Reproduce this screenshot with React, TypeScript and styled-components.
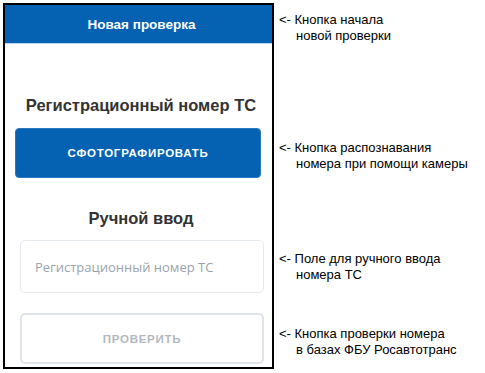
import React from "react";
import styled, { createGlobalStyle } from "styled-components";

const Global = createGlobalStyle`
  html, body { margin: 0; padding: 0; background: #ffffff; }
  body { font-family: "Liberation Sans", Arial, sans-serif; }
  * { box-sizing: border-box; }
`;

const Page = styled.div`
  display: flex;
  align-items: flex-start;
  padding: 3px 0 0 3px;
  width: 485px;
  height: 373px;
`;

const Phone = styled.div`
  width: 271px;
  height: 366px;
  border: 2px solid #000;
  display: flex;
  flex-direction: column;
  background: #fff;
`;

const Header = styled.div`
  height: 39px;
  background: #0562b2;
  border-bottom: 1px solid #b9d6ef;
  color: #fff;
  font-weight: bold;
  font-size: 13.5px;
  display: flex;
  align-items: center;
  justify-content: center;
  padding: 1px 0 0 6px;
`;

const Body = styled.div`
  display: flex;
  flex-direction: column;
`;

const SectionTitle = styled.div<{ $top: number }>`
  margin-top: ${(p) => p.$top}px;
  padding-left: 5px;
  height: 20px;
  line-height: 20px;
  text-align: center;
  font-weight: bold;
  font-size: 16.5px;
  color: #333;
`;

const PrimaryButton = styled.button`
  margin: 13px 11px 0 10px;
  height: 50px;
  border: 1px solid #2a78bd;
  border-radius: 4px;
  background: #0562b2;
  color: #fff;
  font-family: "Liberation Sans", Arial, sans-serif;
  font-weight: bold;
  font-size: 11.5px;
  letter-spacing: 0.75px;
`;

const Input = styled.input`
  margin: 12px 8px 0 15px;
  height: 53px;
  border: 1px solid #e6ebf1;
  border-radius: 5px;
  padding: 0 0 0 14px;
  font-family: "Open Sans", sans-serif;
  font-size: 13px;
  color: #333;
  outline: none;
  &::placeholder { color: #9aa3ad; }
`;

const OutlineButton = styled.button`
  margin: 20px 8px 0 15px;
  height: 51px;
  border: 2px solid #dfe4ea;
  border-radius: 5px;
  background: #fff;
  color: #b3b8be;
  font-family: "Liberation Sans", Arial, sans-serif;
  font-weight: bold;
  font-size: 11.5px;
  letter-spacing: 0.75px;
`;

const Notes = styled.div`
  display: flex;
  flex-direction: column;
  margin-left: 5px;
`;

const Note = styled.div<{ $top: number }>`
  margin-top: ${(p) => p.$top}px;
  font-size: 13px;
  line-height: 15.5px;
  color: #000;
  white-space: nowrap;
`;

const Cont = styled.div`
  padding-left: 17px;
`;

export default function App() {
  return (
    <>
      <Global />
      <Page>
        <Phone>
          <Header>Новая проверка</Header>
          <Body>
            <SectionTitle $top={51}>Регистрационный номер ТС</SectionTitle>
            <PrimaryButton>СФОТОГРАФИРОВАТЬ</PrimaryButton>
            <SectionTitle $top={30}>Ручной ввод</SectionTitle>
            <Input placeholder="Регистрационный номер ТС" />
            <OutlineButton>ПРОВЕРИТЬ</OutlineButton>
          </Body>
        </Phone>
        <Notes>
          <Note $top={9}>
            &lt;- Кнопка начала
            <Cont>новой проверки</Cont>
          </Note>
          <Note $top={97}>
            &lt;- Кнопка распознавания
            <Cont>номера при помощи камеры</Cont>
          </Note>
          <Note $top={80}>
            &lt;- Поле для ручного ввода
            <Cont>номера ТС</Cont>
          </Note>
          <Note $top={44}>
            &lt;- Кнопка проверки номера
            <Cont>в базах ФБУ Росавтотранс</Cont>
          </Note>
        </Notes>
      </Page>
    </>
  );
}
